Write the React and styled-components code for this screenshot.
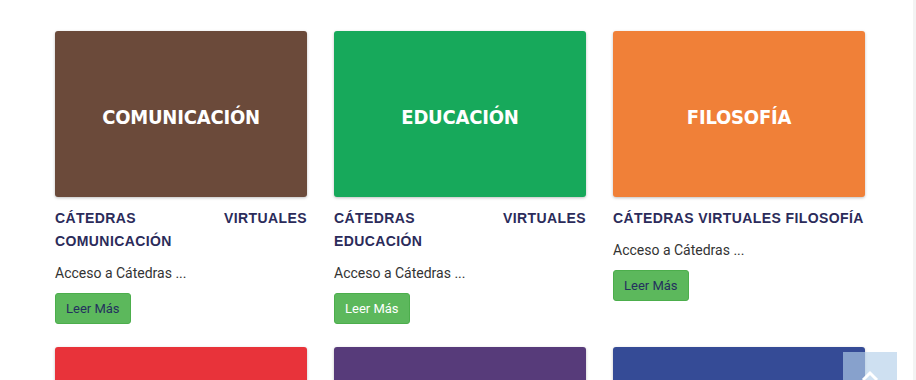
import styled, { createGlobalStyle } from 'styled-components';

const GlobalStyle = createGlobalStyle`
  html, body {
    margin: 0;
    padding: 0;
    background: #fff;
    font-family: Roboto, 'Liberation Sans', sans-serif;
    overflow: hidden;
  }
`;

const Page = styled.div`
  padding: 31px 0 0 55px;
  border-right: 3px solid #f3f3f3;
  width: 916px;
  height: 380px;
  box-sizing: border-box;
  overflow: hidden;
`;

const Grid = styled.div`
  display: grid;
  grid-template-columns: repeat(3, 252px);
  column-gap: 27px;
  row-gap: 23px;
  align-items: start;
`;

const Card = styled.div`
  display: flex;
  flex-direction: column;
`;

const Cover = styled.div`
  height: 166px;
  border-radius: 3px;
  background: ${(p) => p.$bg};
  box-shadow: 0 1px 3px rgba(0, 0, 0, 0.25);
  display: flex;
  align-items: center;
  justify-content: center;
  color: #fff;
  font-family: 'DejaVu Sans Condensed', 'DejaVu Sans', sans-serif;
  font-weight: bold;
  font-size: 20px;
  letter-spacing: -0.2px;
  padding-top: 6px;
  box-sizing: border-box;
`;

const Title = styled.h3`
  margin: 10px 0 0;
  font-family: 'Liberation Sans', Arial, sans-serif;
  font-weight: bold;
  font-size: 14px;
  line-height: 23px;
  letter-spacing: 0.4px;
  color: #2b2b5a;
  text-align: justify;
`;

const Excerpt = styled.p`
  margin: 10px 0 0;
  font-size: 14px;
  line-height: 20px;
  color: #333;
`;

const ReadMore = styled.a`
  margin-top: 10px;
  align-self: flex-start;
  display: inline-block;
  background: #5cb85c;
  border: 1px solid #4cae4c;
  border-radius: 3px;
  padding: 6px 10px;
  font-size: 13px;
  line-height: 17px;
  color: ${(p) => (p.$hover ? '#fff' : '#24305e')};
  text-decoration: none;
  cursor: pointer;
`;

const ToTop = styled.a`
  position: fixed;
  right: 19px;
  bottom: -26px;
  width: 54px;
  height: 54px;
  background: rgba(180, 208, 234, 0.65);
  display: flex;
  justify-content: center;
  padding-top: 18px;
  box-sizing: border-box;
`;

const courses = [
  { label: 'COMUNICACIÓN', bg: '#6b4a3a', title: 'CÁTEDRAS VIRTUALES COMUNICACIÓN' },
  { label: 'EDUCACIÓN', bg: '#17a95b', title: 'CÁTEDRAS VIRTUALES EDUCACIÓN', hover: true },
  { label: 'FILOSOFÍA', bg: '#f08038', title: 'CÁTEDRAS VIRTUALES FILOSOFÍA' },
  { bg: '#e8333a' },
  { bg: '#573b7a' },
  { bg: '#354b96' },
];

const App = () => (
  <>
    <GlobalStyle />
    <Page>
      <Grid>
        {courses.map((c, i) => (
          <Card key={i}>
            <Cover $bg={c.bg}>{c.label}</Cover>
            {c.title && (
              <>
                <Title>{c.title}</Title>
                <Excerpt>Acceso a Cátedras ...</Excerpt>
                <ReadMore $hover={c.hover}>Leer Más</ReadMore>
              </>
            )}
          </Card>
        ))}
      </Grid>
    </Page>
    <ToTop>
      <svg width="18" height="12" viewBox="0 0 18 12">
        <path d="M2 10 L9 3 L16 10" fill="none" stroke="#fff" strokeWidth="3" />
      </svg>
    </ToTop>
  </>
);

export default App;
